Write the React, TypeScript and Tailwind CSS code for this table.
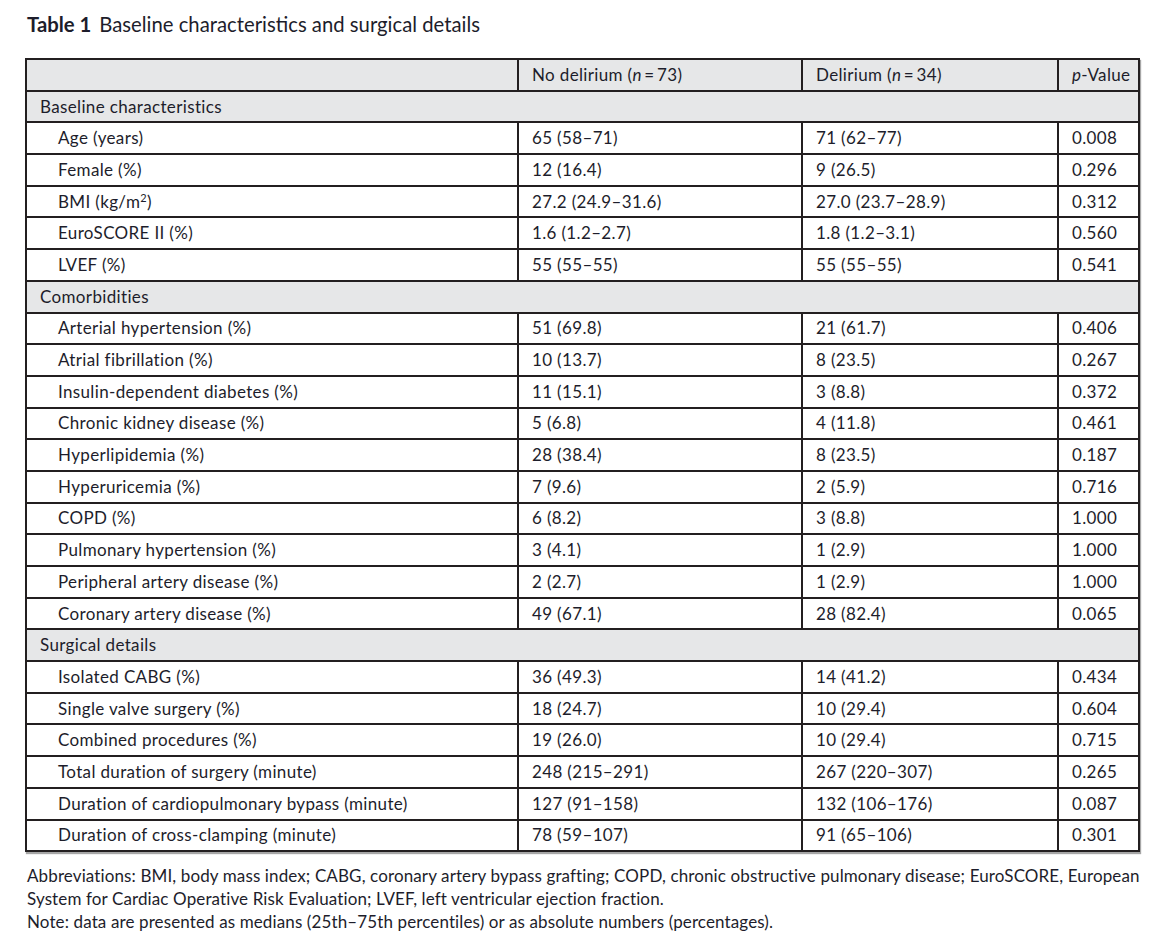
type Row = { label: string; a?: string; b?: string; p?: string; section?: boolean; sup?: string }

const rows: Row[] = [
  { label: 'Baseline characteristics', section: true },
  { label: 'Age (years)', a: '65 (58–71)', b: '71 (62–77)', p: '0.008' },
  { label: 'Female (%)', a: '12 (16.4)', b: '9 (26.5)', p: '0.296' },
  { label: 'BMI (kg/m', sup: '2', a: '27.2 (24.9–31.6)', b: '27.0 (23.7–28.9)', p: '0.312' },
  { label: 'EuroSCORE II (%)', a: '1.6 (1.2–2.7)', b: '1.8 (1.2–3.1)', p: '0.560' },
  { label: 'LVEF (%)', a: '55 (55–55)', b: '55 (55–55)', p: '0.541' },
  { label: 'Comorbidities', section: true },
  { label: 'Arterial hypertension (%)', a: '51 (69.8)', b: '21 (61.7)', p: '0.406' },
  { label: 'Atrial fibrillation (%)', a: '10 (13.7)', b: '8 (23.5)', p: '0.267' },
  { label: 'Insulin-dependent diabetes (%)', a: '11 (15.1)', b: '3 (8.8)', p: '0.372' },
  { label: 'Chronic kidney disease (%)', a: '5 (6.8)', b: '4 (11.8)', p: '0.461' },
  { label: 'Hyperlipidemia (%)', a: '28 (38.4)', b: '8 (23.5)', p: '0.187' },
  { label: 'Hyperuricemia (%)', a: '7 (9.6)', b: '2 (5.9)', p: '0.716' },
  { label: 'COPD (%)', a: '6 (8.2)', b: '3 (8.8)', p: '1.000' },
  { label: 'Pulmonary hypertension (%)', a: '3 (4.1)', b: '1 (2.9)', p: '1.000' },
  { label: 'Peripheral artery disease (%)', a: '2 (2.7)', b: '1 (2.9)', p: '1.000' },
  { label: 'Coronary artery disease (%)', a: '49 (67.1)', b: '28 (82.4)', p: '0.065' },
  { label: 'Surgical details', section: true },
  { label: 'Isolated CABG (%)', a: '36 (49.3)', b: '14 (41.2)', p: '0.434' },
  { label: 'Single valve surgery (%)', a: '18 (24.7)', b: '10 (29.4)', p: '0.604' },
  { label: 'Combined procedures (%)', a: '19 (26.0)', b: '10 (29.4)', p: '0.715' },
  { label: 'Total duration of surgery (minute)', a: '248 (215–291)', b: '267 (220–307)', p: '0.265' },
  { label: 'Duration of cardiopulmonary bypass (minute)', a: '127 (91–158)', b: '132 (106–176)', p: '0.087' },
  { label: 'Duration of cross-clamping (minute)', a: '78 (59–107)', b: '91 (65–106)', p: '0.301' },
]

const cell = 'border-2 border-[#231f20] pl-[13px] pr-1 py-0 align-middle whitespace-nowrap'

export default function App() {
  return (
    <div className="min-h-[947px] w-[1164px] bg-white text-[#1d1d2b] font-['Lato',sans-serif]">
      <div className="px-[25px] pt-[12px]">
        <h1 className="pl-[2px] text-[20.3px] leading-[24px]">
          <span className="font-bold">Table 1</span>
          <span className="ml-[8px]">Baseline characteristics and surgical details</span>
        </h1>

        <table className="mt-[22px] w-[1115px] table-fixed border-collapse text-[17px] leading-[20px] tracking-[0.35px] shadow-[1px_2px_1px_rgba(0,0,0,0.35)]">
          <colgroup>
            <col className="w-[492px]" />
            <col className="w-[284px]" />
            <col className="w-[256px]" />
            <col />
          </colgroup>
          <thead>
            <tr className="h-[31.7px] bg-[#e6e7e8]">
              <th className={cell}></th>
              <th className={`${cell} text-left font-normal`}>
                No delirium (<i>n</i>{'\u2009=\u2009'}73)
              </th>
              <th className={`${cell} text-left font-normal`}>
                Delirium (<i>n</i>{'\u2009=\u2009'}34)
              </th>
              <th className={`${cell} text-left font-normal`}>
                <i>p</i>-Value
              </th>
            </tr>
          </thead>
          <tbody>
            {rows.map((r) =>
              r.section ? (
                <tr key={r.label} className="h-[31.7px] bg-[#e6e7e8]">
                  <td colSpan={4} className={cell}>
                    {r.label}
                  </td>
                </tr>
              ) : (
                <tr key={r.label} className="h-[31.7px]">
                  <td className={`${cell} pl-[31px]`}>
                    {r.label}
                    {r.sup && (
                      <>
                        <sup className="text-[11px]">{r.sup}</sup>)
                      </>
                    )}
                  </td>
                  <td className={cell}>{r.a}</td>
                  <td className={cell}>{r.b}</td>
                  <td className={cell}>{r.p}</td>
                </tr>
              )
            )}
          </tbody>
        </table>

        <div className="mt-[12px] pl-[2px] text-[17px] leading-[23px] tracking-[0.12px] whitespace-nowrap">
          <p>
            Abbreviations: BMI, body mass index; CABG, coronary artery bypass grafting; COPD, chronic obstructive
            pulmonary disease; EuroSCORE, European
            <br />
            System for Cardiac Operative Risk Evaluation; LVEF, left ventricular ejection fraction.
          </p>
          <p>Note: data are presented as medians (25th–75th percentiles) or as absolute numbers (percentages).</p>
        </div>
      </div>
    </div>
  )
}
